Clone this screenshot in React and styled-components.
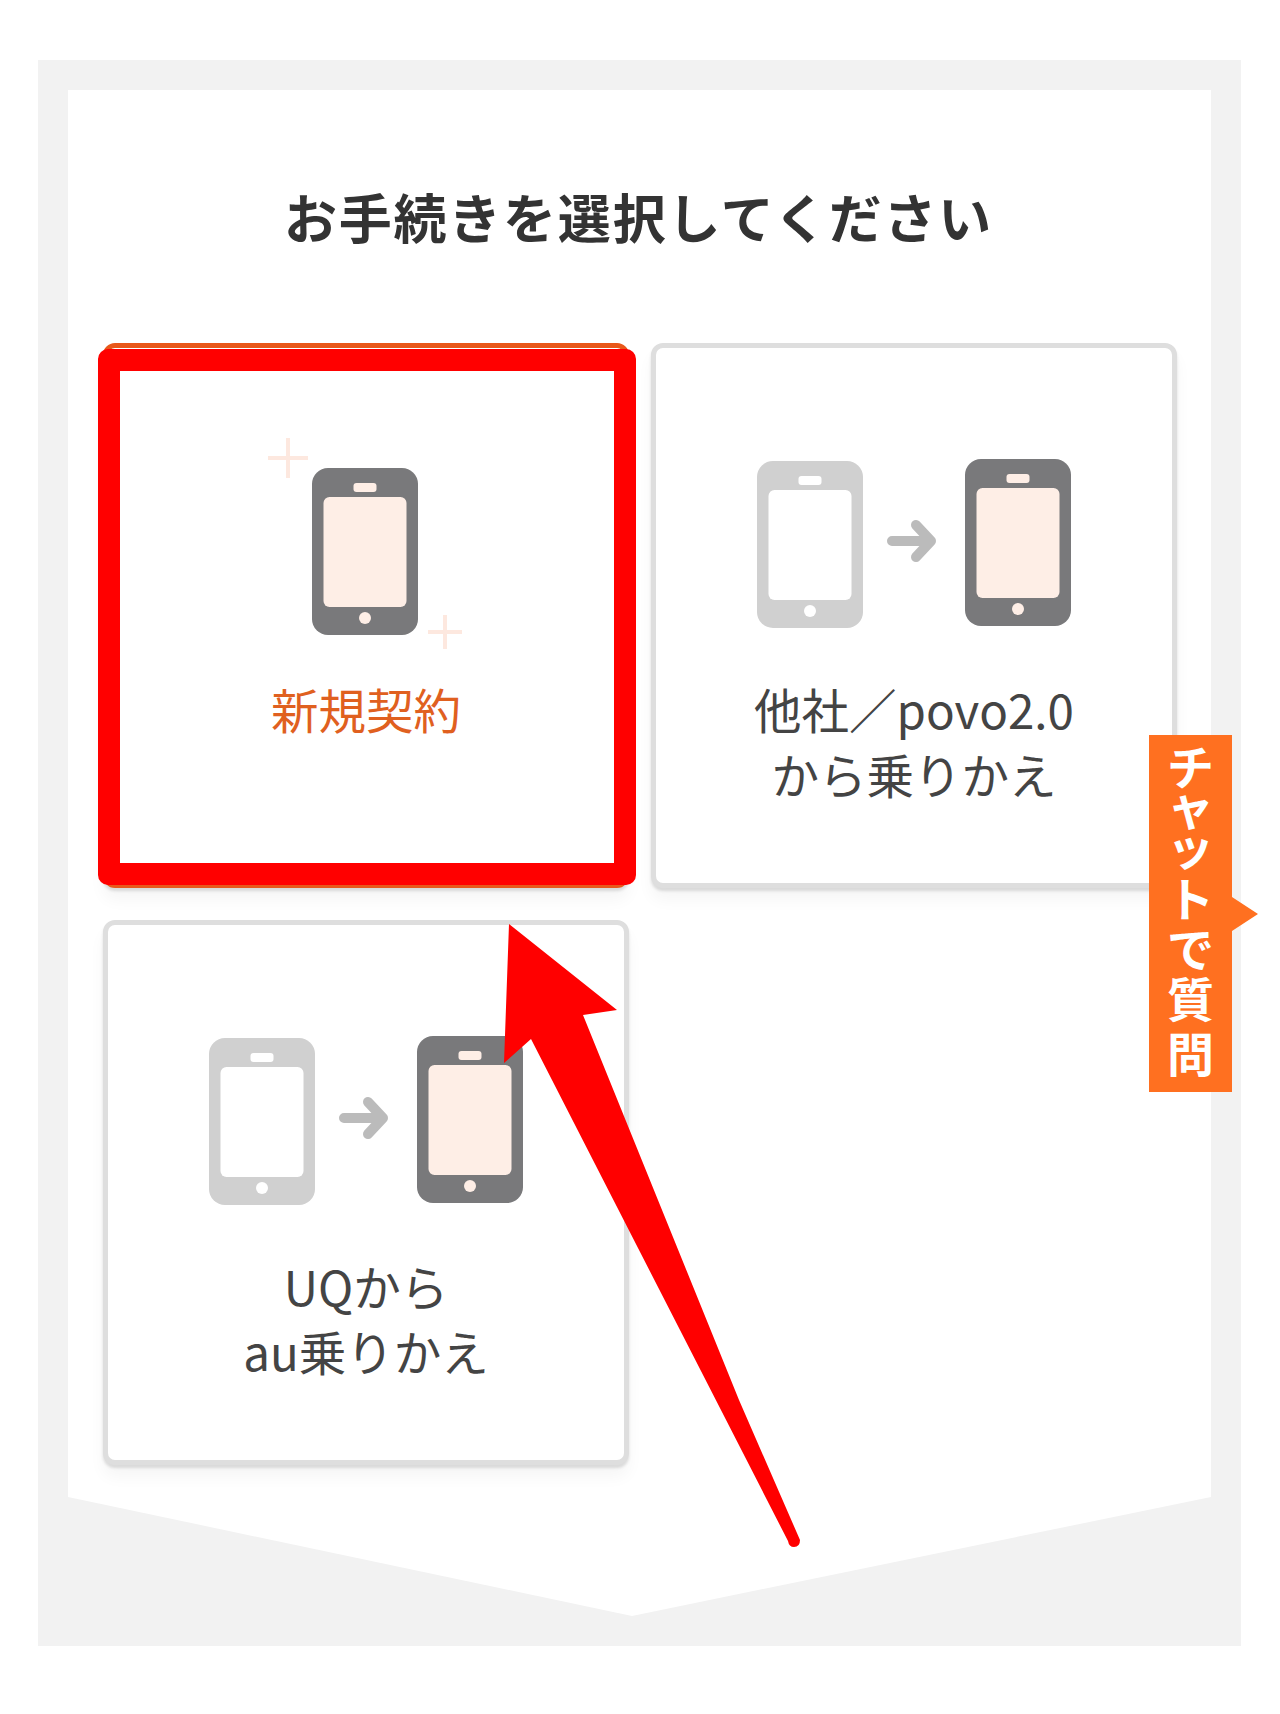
import React from 'react';
import styled, { createGlobalStyle } from 'styled-components';

const GlobalStyle = createGlobalStyle`
  html, body {
    margin: 0;
    padding: 0;
    background: #fff;
  }
  body {
    font-family: "Noto Sans CJK JP", "Noto Sans", sans-serif;
  }
`;

const Page = styled.div`
  position: relative;
  width: 1280px;
  height: 1714px;
  padding: 60px 39px 68px 38px;
  box-sizing: border-box;
  overflow: hidden;
`;

const Panel = styled.section`
  height: 100%;
  padding: 30px;
  box-sizing: border-box;
  background: #f2f2f2;
`;

const Sheet = styled.div`
  height: 100%;
  padding: 90px 0 0 35px;
  box-sizing: border-box;
  background: #fff;
  clip-path: polygon(0 0, 100% 0, 100% 1407px, 564px 100%, 0 1407px);
`;

const Title = styled.h1`
  margin: 0 37px 91px 0;
  font-size: 53px;
  font-weight: 700;
  line-height: 72px;
  letter-spacing: 1.8px;
  text-align: center;
  color: #333;
`;

const CardGrid = styled.div`
  display: grid;
  grid-template-columns: 526px 526px;
  grid-auto-rows: 545px;
  column-gap: 22px;
  row-gap: 32px;
`;

const Card = styled.div`
  position: relative;
  display: flex;
  flex-direction: column;
  align-items: center;
  padding-top: 90px;
  box-sizing: border-box;
  background: #fff;
  border: 5px solid ${props => (props.$selected ? '#e8581a' : '#dedede')};
  border-radius: 12px;
  box-shadow: 0 3px 3px rgba(0, 0, 0, 0.12), 0 12px 16px rgba(0, 0, 0, 0.04);
`;

const IconSvg = styled.svg`
  display: block;
  width: 314px;
  height: 220px;
`;

const Label = styled.div`
  margin-top: 18px;
  font-size: 47.5px;
  line-height: 65px;
  text-align: center;
  color: ${props => (props.$selected ? '#e0601f' : '#444')};
`;

const RedFrame = styled.div`
  position: absolute;
  top: 1px;
  left: -10px;
  right: -12px;
  bottom: -2px;
  border: 22px solid #ff0000;
  border-radius: 10px;
  box-sizing: border-box;
`;

const ChatTab = styled.div`
  position: absolute;
  top: 735px;
  left: 1149px;
  display: flex;
  align-items: flex-start;
  justify-content: center;
  width: 83px;
  height: 357px;
  padding-top: 9px;
  box-sizing: border-box;
  background: #ff7020;

  &::after {
    content: '';
    position: absolute;
    top: 162px;
    left: 83px;
    width: 26px;
    height: 34px;
    background: #ff7020;
    clip-path: polygon(0 0, 100% 50%, 0 100%);
  }
`;

const ChatText = styled.div`
  writing-mode: vertical-rl;
  text-orientation: upright;
  font-size: 47px;
  font-weight: 700;
  line-height: 1;
  font-feature-settings: "vert" 0, "vrt2" 0;
  color: #fff;
`;

const ChatChar = styled.span`
  letter-spacing: ${props => props.$space}px;
`;

const ArrowSvg = styled.svg`
  position: absolute;
  top: 0;
  left: 0;
  width: 1280px;
  height: 1714px;
  pointer-events: none;
`;

const chatChars = [
  ['チ', -7],
  ['ャ', -7],
  ['ッ', 5],
  ['ト', 3],
  ['で', 3],
  ['質', 8],
  ['問', 0],
];

const Phone = ({ x, y, active }) => {
  const body = active ? '#79797b' : '#d0d0d0';
  const screen = active ? '#feeee6' : '#fff';
  return (
    <g transform={`translate(${x} ${y})`}>
      <rect width="106" height="167" rx="16" fill={body} />
      <rect x="11.5" y="29" width="83" height="110" rx="6" fill={screen} />
      <rect x="41.5" y="15" width="23" height="9" rx="3" fill={screen} />
      <circle cx="53" cy="150" r="6" fill={screen} />
    </g>
  );
};

const Plus = ({ cx, cy, size }) => (
  <path
    d={`M${cx - size / 2} ${cy}H${cx + size / 2}M${cx} ${cy - size / 2}V${cy + size / 2}`}
    stroke="#fde8df"
    strokeWidth="4"
    fill="none"
  />
);

const NewIcon = () => (
  <IconSvg viewBox="0 0 314 220">
    <Plus cx={79} cy={20} size={40} />
    <Phone x={103} y={30} active />
    <Plus cx={236} cy={194} size={34} />
  </IconSvg>
);

const SwitchIcon = () => (
  <IconSvg viewBox="0 0 314 220">
    <Phone x={0} y={23} />
    <path
      d="M135 103H174M159 87L174 103L159 119"
      stroke="#bbb"
      strokeWidth="10"
      strokeLinecap="round"
      strokeLinejoin="round"
      fill="none"
    />
    <Phone x={208} y={21} active />
  </IconSvg>
);

const App = () => {
  return (
    <Page>
      <GlobalStyle />
      <Panel>
        <Sheet>
          <Title>お手続きを選択してください</Title>
          <CardGrid>
            <Card $selected>
              <NewIcon />
              <Label $selected>新規契約</Label>
              <RedFrame />
            </Card>
            <Card>
              <SwitchIcon />
              <Label>
                他社／povo2.0
                <br />
                から乗りかえ
              </Label>
            </Card>
            <Card>
              <SwitchIcon />
              <Label>
                UQから
                <br />
                au乗りかえ
              </Label>
            </Card>
          </CardGrid>
        </Sheet>
      </Panel>
      <ChatTab>
        <ChatText>
          {chatChars.map(([ch, space], i) => (
            <ChatChar key={i} $space={space}>{ch}</ChatChar>
          ))}
        </ChatText>
      </ChatTab>
      <ArrowSvg viewBox="0 0 1280 1714">
        <path
          d="M509 924L617 1010L583 1015L739 1400L800 1540Q800 1547 794 1547Q789 1547 788 1541L531 1039L504 1063Z"
          fill="#ff0000"
        />
      </ArrowSvg>
    </Page>
  );
};

export default App;
